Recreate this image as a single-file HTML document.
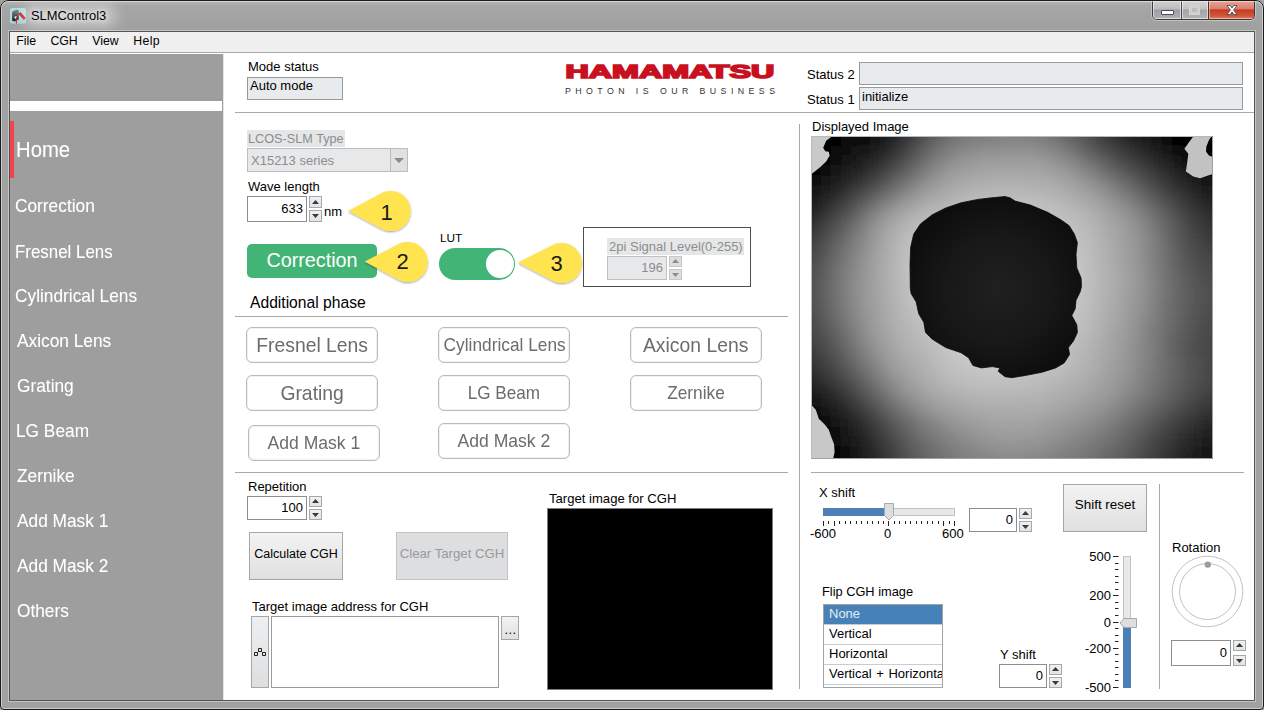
<!DOCTYPE html>
<html lang="en">
<head>
<meta charset="utf-8">
<title>SLMControl3</title>
<style>
*{box-sizing:border-box;margin:0;padding:0}
html,body{width:1264px;height:710px;overflow:hidden;background:#a0a0a0;font-family:"Liberation Sans",sans-serif;font-size:13px;color:#000}
.a{position:absolute;white-space:nowrap}
#win{position:absolute;left:0;top:0;width:1264px;height:710px;background:#a1a1a1;border-radius:8px 8px 4px 4px;overflow:hidden}
#winb{left:0;top:0;width:1264px;height:710px;border:1px solid #1b1b1b;border-radius:8px 8px 4px 4px;box-shadow:inset 0 0 0 1px rgba(255,255,255,.45);pointer-events:none}
#titlegrad{left:0;top:0;width:1264px;height:30px;background:linear-gradient(#b9b9b9 0,#a6a6a6 6px,#a0a0a0 30px)}
#client{left:9px;top:31px;width:1246px;height:670px;background:#fff;border:1px solid #555;box-shadow:0 0 0 1px rgba(255,255,255,.38)}
#menubar{left:10px;top:32px;width:1244px;height:21px;background:#f0f0f0;border-bottom:1px solid #a8a8a8}
#menubar span{position:absolute;top:2px;font-size:12.5px;color:#000}
#side{left:10px;top:54px;width:213px;box-shadow:1px 0 0 #e6e6e6;height:646px;background:#9e9e9e}
.nav{position:absolute;color:#fff;font-size:18.6px;transform:scaleX(.93);transform-origin:0 50%;white-space:nowrap;text-shadow:0 0 1px rgba(255,255,255,.35)}
.lbl{position:absolute;white-space:nowrap;font-size:13px;color:#000}
.hl{position:absolute;height:1px;background:#a9a9a9}
.vl{position:absolute;width:1px;background:#a9a9a9}
.ind{position:absolute;background:#e8ebee;border:1px solid #9a9a9a;font-size:13px;padding:1px 2px}
.num{position:absolute;background:#fff;border:1px solid #8e8e8e;font-size:13px;text-align:right;padding-right:3px}
.sp{position:absolute;width:13px;height:11px;border:1px solid #a4a8ab;background:linear-gradient(#f0f1f2,#e2e3e4)}
.sp.t{height:12px}
.sp:after{content:"";position:absolute;left:2px;top:3px;width:7px;height:4px;background:#3a3a3a}
.sp.u:after{top:2px;clip-path:polygon(50% 0,100% 100%,0 100%)}
.sp.d:after{top:3px;clip-path:polygon(0 0,100% 0,50% 100%)}
.sp.t.u:after{top:3px}
.sp.t.d:after{top:3px}
.pb{position:absolute;border:1px solid #b9b9b9;border-radius:6px;background:#fff;color:#6c6c6c;text-align:center;box-shadow:inset 0 0 0 1px #f1f1f1}
.dis{color:#8d8d8d}
.sp.off{background:#dcdee0;border-color:#c6c6c6}
.sp.off:after{background:#8e8e8e}
.r{text-align:right}
.li{left:0;width:118px;height:21px;border-top:1px solid #c9cdd1;padding:1px 0 0 5px;word-spacing:1px}
.pb span{display:inline-block;transform:scaleX(.93)}
.btn{position:absolute;border:1px solid #a6a6a6;background:linear-gradient(#f3f3f3,#e0e0e0);text-align:center;font-size:13px}
</style>
</head>
<body>
<div id="win">
<div id="titlegrad" class="a"></div>
<!-- title -->
<svg class="a" style="left:10px;top:8px" width="16" height="16" viewBox="0 0 16 16"><defs><linearGradient id="ig" x1="0" y1="0" x2="0" y2="1"><stop offset="0" stop-color="#8a8a8a"/><stop offset="1" stop-color="#161616"/></linearGradient></defs><rect x="0" y="0" width="16" height="15.6" rx="2.6" fill="#a9e0e4"/><rect x="0.5" y="11" width="15" height="4.6" rx="2" fill="#98cdd2" opacity=".6"/><path d="M2.1 3.8L6.5 1.4L8.8 2.2V11.4L4.2 13.6L2.1 12.4Z" fill="url(#ig)"/><circle cx="5.8" cy="9.5" r="1.3" fill="#fff"/><path d="M6.4 8.9V15.4" stroke="#e01622" stroke-width="1.1"/><path d="M9.4 5L14.8 11" stroke="#e0101c" stroke-width="2.7"/></svg>
<div class="a" style="left:22px;top:3px;width:96px;height:26px;border-radius:13px;background:rgba(255,255,255,.32);filter:blur(6px)"></div><div class="a" style="left:31px;top:8px;font-size:12.9px;color:#000;text-shadow:0 0 5px #fff,0 0 9px #fff">SLMControl3</div>
<div class="a" style="left:1152px;top:0;width:103px;height:20px;border:1px solid #3c3c3c;border-top:0;border-radius:0 0 5px 5px;overflow:hidden;box-shadow:0 0 0 1px rgba(255,255,255,.35)">
<div class="a" style="left:0;top:0;width:28px;height:19px;background:linear-gradient(#d2d2d2 0,#bcbcbc 48%,#9e9ea2 52%,#b2b2b6 100%);box-shadow:inset 0 0 0 1px rgba(255,255,255,.55)"></div>
<div class="a" style="left:28px;top:0;width:1px;height:19px;background:#4a4a4a"></div>
<div class="a" style="left:29px;top:0;width:26px;height:19px;background:linear-gradient(#d6d6d6 0,#c2c2c2 48%,#a4a4a6 52%,#b4b4b6 100%);box-shadow:inset 0 0 0 1px rgba(255,255,255,.55)"></div>
<div class="a" style="left:55px;top:0;width:1px;height:19px;background:#5a2a24"></div>
<div class="a" style="left:56px;top:0;width:46px;height:19px;background:linear-gradient(#eba99b 0,#dc7f6c 46%,#c43c26 52%,#d2573c 85%,#e08a66 100%);box-shadow:inset 0 0 0 1px rgba(255,255,255,.4)"></div>
<div class="a" style="left:8px;top:10px;width:13px;height:5px;background:#fff;border:1px solid #454a63;border-radius:1px"></div>
<div class="a" style="left:36px;top:5px;width:11px;height:10px;border:1px solid #d4d4d4;background:#bdbdbd;box-shadow:inset 0 0 0 2px #cfcfcf"></div>
<svg class="a" style="left:71px;top:3px" width="16" height="14" viewBox="0 0 16 14"><path d="M3 2.5h3.2l1.8 2.6l1.8-2.6h3.2l-3.4 4.5l3.4 4.5h-3.2l-1.8-2.6l-1.8 2.6h-3.2l3.4-4.5z" fill="#fff" stroke="#4a4a5a" stroke-width="0.9" stroke-linejoin="round"/></svg>
</div>
<div id="client" class="a"></div>
<div id="menubar" class="a"><span style="left:6.2px;font-size:12.3px">File</span><span style="left:40.4px;font-size:12.3px">CGH</span><span style="left:82.3px;font-size:12.3px">View</span><span style="left:123.3px;font-size:12.3px;letter-spacing:.35px">Help</span></div>
<div id="side" class="a">
 <div class="a" style="left:0;top:47px;width:212px;height:10px;background:#fff"></div>
 <div class="a" style="left:0;top:67px;width:4px;height:57px;background:#f4424d"></div>
 <div class="nav" style="left:6px;top:83px;font-size:21.6px;transform:scaleX(.94)">Home</div>
 <div class="nav" style="left:5px;top:141px">Correction</div>
 <div class="nav" style="left:5px;top:187px;font-size:18.6px;transform:scaleX(.908)">Fresnel Lens</div>
 <div class="nav" style="left:5px;top:231px">Cylindrical Lens</div>
 <div class="nav" style="left:7px;top:276px">Axicon Lens</div>
 <div class="nav" style="left:7px;top:321px">Grating</div>
 <div class="nav" style="left:6px;top:366px">LG Beam</div>
 <div class="nav" style="left:7px;top:411px">Zernike</div>
 <div class="nav" style="left:7px;top:456px">Add Mask 1</div>
 <div class="nav" style="left:7px;top:501px">Add Mask 2</div>
 <div class="nav" style="left:7px;top:546px">Others</div>
</div>
<!--MAIN-->
<div id="main" class="a" style="left:0;top:0;width:1264px;height:710px">
<!-- top strip -->
<div class="lbl" style="left:248px;top:59px">Mode status</div>
<div class="ind" style="left:247px;top:77px;width:96px;height:23px;padding-top:0">Auto mode</div>
<svg class="a" style="left:560px;top:58px" width="230" height="44" viewBox="0 0 230 44"><text x="5.6" y="19.5" font-family="Liberation Sans,sans-serif" font-weight="bold" font-size="18" fill="#c8101e" stroke="#c8101e" stroke-width="1.6" stroke-linejoin="miter" textLength="208.6" lengthAdjust="spacingAndGlyphs">HAMAMATSU</text><text x="5" y="35.9" font-family="Liberation Sans,sans-serif" font-size="8.8" fill="#333" textLength="210" lengthAdjust="spacing">PHOTON IS OUR BUSINESS</text></svg>
<div class="lbl" style="left:807px;top:67px">Status 2</div>
<div class="ind" style="left:859px;top:62px;width:384px;height:23px"></div>
<div class="lbl" style="left:807px;top:92px">Status 1</div>
<div class="ind" style="left:859px;top:87px;width:384px;height:23px">initialize</div>
<div class="hl" style="left:235px;top:112px;width:1019px"></div>
<!--LEFTCOL-->
<div class="lbl dis" style="left:247px;top:130px;width:98px;height:17px;background:#e4e6e7;padding:2px 0 0 1px;font-size:12.7px">LCOS-SLM Type</div>
<div class="a" style="left:247px;top:148px;width:161px;height:24px;background:#e6e8ea;border:1px solid #bdbdbd;color:#8d8d8d;padding:4px 0 0 3px">X15213 series<div class="a" style="left:142px;top:-1px;width:18px;height:24px;border:1px solid #bdbdbd;background:#dfe1e3"></div><div class="a" style="left:146px;top:9px;border:5px solid transparent;border-top:5px solid #8a8a8a;border-bottom:0"></div></div>
<div class="lbl" style="left:248px;top:179px">Wave length</div>
<div class="num" style="left:247px;top:196px;width:60px;height:26px;padding-top:4px">633</div>
<div class="sp t u" style="left:309px;top:196px"></div><div class="sp t d" style="left:309px;top:210px"></div>
<div class="lbl" style="left:324px;top:204px">nm</div>
<svg class="a" style="left:340px;top:182px" width="80" height="60" viewBox="0 0 80 60"><defs><filter id="cs" x="-20%" y="-20%" width="140%" height="150%"><feGaussianBlur in="SourceAlpha" stdDeviation="0.9"/><feOffset dx="0.4" dy="1"/><feComponentTransfer><feFuncA type="linear" slope="0.38"/></feComponentTransfer><feMerge><feMergeNode/><feMergeNode in="SourceGraphic"/></feMerge></filter></defs><path d="M8.3 29 L41 11.5 A20 20 0 1 1 41 46.5 Z" fill="#ffe450" filter="url(#cs)"/><text x="46.5" y="37.5" font-family="Liberation Sans,sans-serif" font-size="22" text-anchor="middle" fill="#1a1a1a">1</text></svg>
<div class="a" style="left:247px;top:244px;width:130px;height:34px;background:#42b476;border-radius:5px;color:#fff;font-size:19.8px;text-align:center;line-height:33px">Correction</div>
<svg class="a" style="left:356px;top:233px" width="80" height="60" viewBox="0 0 80 60"><path d="M8.7 28.5 L42 11.5 A20 20 0 1 1 42 46.5 Z" fill="#ffe450" filter="url(#cs)"/><text x="46.5" y="36" font-family="Liberation Sans,sans-serif" font-size="22" text-anchor="middle" fill="#1a1a1a">2</text></svg>
<div class="lbl" style="left:440px;top:231px;font-size:11.8px">LUT</div>
<div class="a" style="left:439px;top:248px;width:76px;height:32px;border-radius:16px;background:#42b476"></div>
<div class="a" style="left:486px;top:250px;width:28px;height:28px;border-radius:14px;background:#fff"></div>
<svg class="a" style="left:510px;top:234px" width="80" height="60" viewBox="0 0 80 60"><path d="M8 28.5 L42 11.5 A20 20 0 1 1 42 46.5 Z" fill="#ffe450" filter="url(#cs)"/><text x="46.5" y="36.5" font-family="Liberation Sans,sans-serif" font-size="22" text-anchor="middle" fill="#1a1a1a">3</text></svg>
<div class="a" style="left:583px;top:227px;width:168px;height:60px;border:1px solid #4d4d4d"></div>
<div class="lbl dis" style="left:607px;top:238px;width:137px;height:17px;background:#e4e6e7;padding:1px 0 0 2px">2pi Signal Level(0-255)</div>
<div class="num" style="left:607px;top:256px;width:60px;height:24px;padding-top:3px;background:#e6e8ea;border-color:#c0c0c0;color:#8d8d8d">196</div>
<div class="sp u off" style="left:669px;top:256px"></div><div class="sp d off" style="left:669px;top:269px"></div>
<div class="lbl" style="left:250px;top:294px;font-size:15.65px">Additional phase</div>
<div class="hl" style="left:235px;top:316px;width:553px"></div>
<div class="pb" style="left:246px;top:327px;width:132px;height:36px;font-size:20.8px;line-height:33px"><span>Fresnel Lens</span></div>
<div class="pb" style="left:438px;top:327px;width:132px;height:36px;font-size:18.6px;line-height:33px"><span>Cylindrical Lens</span></div>
<div class="pb" style="left:630px;top:327px;width:132px;height:36px;font-size:20.8px;line-height:33px"><span>Axicon Lens</span></div>
<div class="pb" style="left:246px;top:375px;width:132px;height:36px;font-size:20.8px;line-height:34px"><span>Grating</span></div>
<div class="pb" style="left:438px;top:375px;width:132px;height:36px;font-size:18.4px;line-height:33px"><span>LG Beam</span></div>
<div class="pb" style="left:630px;top:375px;width:132px;height:36px;font-size:18.6px;line-height:33px"><span>Zernike</span></div>
<div class="pb" style="left:248px;top:425px;width:132px;height:36px;font-size:18.9px;line-height:33px"><span>Add Mask 1</span></div>
<div class="pb" style="left:438px;top:423px;width:132px;height:36px;font-size:18.9px;line-height:33px"><span>Add Mask 2</span></div>
<div class="hl" style="left:235px;top:472px;width:553px"></div>
<div class="lbl" style="left:248px;top:479px">Repetition</div>
<div class="num" style="left:247px;top:496px;width:60px;height:24px;padding-top:3px">100</div>
<div class="sp u" style="left:309px;top:496px"></div><div class="sp d" style="left:309px;top:509px"></div>
<div class="btn" style="left:249px;top:532px;width:94px;height:48px;line-height:42px;font-size:12.5px">Calculate CGH</div>
<div class="btn" style="left:396px;top:532px;width:112px;height:48px;line-height:41px;font-size:13.2px;background:#dcdee0;border-color:#c2c2c2;color:#999">Clear Target CGH</div>
<div class="lbl" style="left:252px;top:599px">Target image address for CGH</div>
<div class="btn" style="left:251px;top:616px;width:18px;height:72px;background:linear-gradient(#eeeff0,#dcdee0)"></div>
<svg class="a" style="left:253px;top:647px" width="14" height="10" viewBox="0 0 14 10"><path d="M1.5 5.5h3v3h-3zM9.5 5.5h3v3h-3zM5.5 1.5h3v3h-3zM4.5 5.5l1-1M8.5 4.5l1 1" fill="none" stroke="#222" stroke-width="1"/></svg>
<div class="a" style="left:271px;top:616px;width:228px;height:72px;background:#fff;border:1px solid #9a9a9a"></div>
<div class="btn" style="left:501px;top:616px;width:18px;height:24px;line-height:26px;font-size:13px;letter-spacing:0.4px;padding-left:1px">...</div>
<div class="lbl" style="left:549px;top:491px;font-size:13.1px">Target image for CGH</div>
<div class="a" style="left:547px;top:508px;width:226px;height:182px;background:#000;border:1px solid #7c7c7c"></div>
<div class="vl" style="left:799px;top:124px;height:565px"></div>

<div class="lbl" style="left:812px;top:119px">Displayed Image</div>
<svg class="a" style="left:811px;top:136px" width="402" height="323" viewBox="811 136 402 323">
<defs>
<filter id="fb" filterUnits="userSpaceOnUse" x="771" y="96" width="482" height="403"><feGaussianBlur stdDeviation="7"/></filter>
<radialGradient id="g2" gradientUnits="userSpaceOnUse" cx="998" cy="290" r="95"><stop offset="0" stop-color="#202020"/><stop offset="0.55" stop-color="#181818"/><stop offset="1" stop-color="#0d0d0d"/></radialGradient>
</defs>
<rect x="811" y="136" width="402" height="323" fill="#777"/>
<g filter="url(#fb)"><!--FIELD--><path fill="#060606" d="M791 116h70v10h-70zM1171 116h70v10h-70zM791 126h70v10h-70zM1171 126h70v10h-70zM791 136h50v10h-50zM1171 136h70v10h-70zM791 146h40v10h-40zM1191 146h50v10h-50zM791 156h40v10h-40zM1201 156h40v10h-40zM791 166h30v10h-30zM1211 166h30v10h-30zM791 176h20v10h-20zM791 406h20v10h-20zM791 416h30v10h-30zM791 426h40v10h-40zM791 436h40v10h-40zM791 446h50v10h-50zM791 456h50v10h-50zM791 466h50v10h-50zM791 476h50v10h-50z"/><path fill="#090909" d="M861 116h10v10h-10zM1161 116h10v10h-10zM861 126h10v10h-10zM1161 126h10v10h-10zM841 136h20v10h-20zM831 146h10v10h-10zM1181 146h10v10h-10zM1191 156h10v10h-10zM1201 166h10v10h-10zM811 406h10v10h-10zM821 416h10v10h-10zM831 436h10v10h-10z"/><path fill="#0c0c0c" d="M861 136h10v10h-10zM1161 136h10v10h-10zM841 146h10v10h-10zM831 156h10v10h-10zM821 166h10v10h-10zM811 176h10v10h-10zM831 426h10v10h-10zM841 456h10v10h-10zM841 466h10v10h-10zM841 476h10v10h-10z"/><path fill="#0f0f0f" d="M871 116h10v10h-10zM1151 116h10v10h-10zM871 126h10v10h-10zM1151 126h10v10h-10zM1171 146h10v10h-10zM1181 156h10v10h-10zM1211 176h30v10h-30zM791 186h20v10h-20zM791 396h20v10h-20zM841 446h10v10h-10z"/><path fill="#121212" d="M871 136h10v10h-10zM851 146h10v10h-10zM841 156h10v10h-10zM831 166h10v10h-10zM1191 166h10v10h-10zM821 176h10v10h-10zM1201 176h10v10h-10zM811 186h10v10h-10zM821 406h10v10h-10zM831 416h10v10h-10zM841 436h10v10h-10zM1211 456h30v10h-30zM1211 466h30v10h-30zM1211 476h30v10h-30z"/><path fill="#151515" d="M1141 116h10v10h-10zM1141 126h10v10h-10zM1151 136h10v10h-10zM861 146h10v10h-10zM1161 146h10v10h-10zM1211 186h30v10h-30zM791 196h20v10h-20zM811 396h10v10h-10zM841 426h10v10h-10zM1211 446h30v10h-30zM851 456h10v10h-10zM1201 456h10v10h-10zM851 466h10v10h-10zM1201 466h10v10h-10zM851 476h10v10h-10zM1201 476h10v10h-10z"/><path fill="#181818" d="M881 116h10v10h-10zM881 126h10v10h-10zM851 156h10v10h-10zM1171 156h10v10h-10zM1181 166h10v10h-10zM1211 436h30v10h-30zM851 446h10v10h-10zM1201 446h10v10h-10z"/><path fill="#1b1b1b" d="M1131 116h10v10h-10zM1131 126h10v10h-10zM1141 136h10v10h-10zM841 166h10v10h-10zM831 176h10v10h-10zM1191 176h10v10h-10zM821 186h10v10h-10zM1201 186h10v10h-10zM811 196h10v10h-10zM791 386h20v10h-20zM821 396h10v10h-10zM831 406h10v10h-10zM841 416h10v10h-10zM851 436h10v10h-10zM1201 436h10v10h-10zM1191 456h10v10h-10zM1191 466h10v10h-10zM1191 476h10v10h-10z"/><path fill="#1e1e1e" d="M881 136h10v10h-10zM871 146h10v10h-10zM1151 146h10v10h-10zM1211 196h30v10h-30zM791 206h20v10h-20zM811 386h10v10h-10zM1211 426h30v10h-30zM1191 446h10v10h-10zM861 456h10v10h-10zM861 466h10v10h-10zM861 476h10v10h-10z"/><path fill="#212121" d="M1131 136h10v10h-10zM861 156h10v10h-10zM1161 156h10v10h-10zM851 166h10v10h-10zM1171 166h10v10h-10zM1181 176h10v10h-10zM851 426h10v10h-10zM1201 426h10v10h-10zM861 446h10v10h-10zM1181 456h10v10h-10zM1181 466h10v10h-10zM1181 476h10v10h-10z"/><path fill="#242424" d="M891 116h10v10h-10zM1121 116h10v10h-10zM891 126h10v10h-10zM1121 126h10v10h-10zM841 176h10v10h-10zM831 186h10v10h-10zM1191 186h10v10h-10zM1201 196h10v10h-10zM811 206h10v10h-10zM791 376h20v10h-20zM861 436h10v10h-10zM1191 436h10v10h-10zM1181 446h10v10h-10z"/><path fill="#272727" d="M881 146h10v10h-10zM1141 146h10v10h-10zM821 196h10v10h-10zM1211 206h30v10h-30zM791 216h20v10h-20zM821 386h10v10h-10zM831 396h10v10h-10zM841 406h10v10h-10zM851 416h10v10h-10zM1211 416h30v10h-30zM871 456h10v10h-10zM871 466h10v10h-10zM871 476h10v10h-10z"/><path fill="#2a2a2a" d="M891 136h10v10h-10zM1121 136h10v10h-10zM871 156h10v10h-10zM1151 156h10v10h-10zM861 166h10v10h-10zM1161 166h10v10h-10zM811 376h10v10h-10zM1201 416h10v10h-10zM861 426h10v10h-10zM1191 426h10v10h-10zM1181 436h10v10h-10zM871 446h10v10h-10zM1171 456h10v10h-10zM1171 466h10v10h-10zM1171 476h10v10h-10z"/><path fill="#2d2d2d" d="M1111 116h10v10h-10zM1111 126h10v10h-10zM1131 146h10v10h-10zM851 176h10v10h-10zM1171 176h10v10h-10zM1181 186h10v10h-10zM1191 196h10v10h-10zM1201 206h10v10h-10zM1211 216h30v10h-30zM791 366h20v10h-20zM1171 446h10v10h-10z"/><path fill="#303030" d="M841 186h10v10h-10zM821 206h10v10h-10zM811 216h10v10h-10zM811 366h10v10h-10zM831 386h10v10h-10zM841 396h10v10h-10zM1211 406h30v10h-30zM1191 416h10v10h-10zM1181 426h10v10h-10zM871 436h10v10h-10z"/><path fill="#333333" d="M901 116h10v10h-10zM901 126h10v10h-10zM1111 136h10v10h-10zM891 146h10v10h-10zM881 156h10v10h-10zM1141 156h10v10h-10zM831 196h10v10h-10zM1201 216h10v10h-10zM791 226h20v10h-20zM1211 226h30v10h-30zM791 356h20v10h-20zM821 376h10v10h-10zM851 406h10v10h-10zM1201 406h10v10h-10zM861 416h10v10h-10zM1171 436h10v10h-10zM881 456h10v10h-10zM1161 456h10v10h-10zM881 466h10v10h-10zM1161 466h10v10h-10zM881 476h10v10h-10zM1161 476h10v10h-10z"/><path fill="#363636" d="M1101 116h10v10h-10zM1101 126h10v10h-10zM901 136h10v10h-10zM1121 146h10v10h-10zM871 166h10v10h-10zM1151 166h10v10h-10zM1161 176h10v10h-10zM1171 186h10v10h-10zM1181 196h10v10h-10zM1191 206h10v10h-10zM1161 446h10v10h-10z"/><path fill="#393939" d="M861 176h10v10h-10zM811 226h10v10h-10zM1201 226h10v10h-10zM1211 236h30v10h-30zM791 346h20v10h-20zM811 356h10v10h-10zM1211 396h30v10h-30zM1181 416h10v10h-10zM871 426h10v10h-10zM1171 426h10v10h-10zM881 446h10v10h-10z"/><path fill="#3c3c3c" d="M1101 136h10v10h-10zM1131 156h10v10h-10zM851 186h10v10h-10zM821 216h10v10h-10zM1191 216h10v10h-10zM791 236h20v10h-20zM821 366h10v10h-10zM831 376h10v10h-10zM841 386h10v10h-10zM1201 396h10v10h-10zM1191 406h10v10h-10zM1161 436h10v10h-10zM1151 456h10v10h-10zM1151 466h10v10h-10zM1151 476h10v10h-10z"/><path fill="#3f3f3f" d="M1141 166h10v10h-10zM841 196h10v10h-10zM831 206h10v10h-10zM1181 206h10v10h-10zM1201 236h10v10h-10zM1211 246h30v10h-30zM791 336h20v10h-20zM811 346h10v10h-10zM1211 386h30v10h-30zM851 396h10v10h-10zM861 406h10v10h-10zM881 436h10v10h-10zM1151 446h10v10h-10z"/><path fill="#424242" d="M911 116h10v10h-10zM1091 116h10v10h-10zM911 126h10v10h-10zM1091 126h10v10h-10zM901 146h10v10h-10zM1111 146h10v10h-10zM891 156h10v10h-10zM881 166h10v10h-10zM1151 176h10v10h-10zM1161 186h10v10h-10zM1171 196h10v10h-10zM1191 226h10v10h-10zM811 236h10v10h-10zM791 246h20v10h-20zM1201 246h10v10h-10zM1211 256h30v10h-30zM1211 366h30v10h-30zM1211 376h30v10h-30zM871 416h10v10h-10zM1171 416h10v10h-10zM1161 426h10v10h-10zM891 456h10v10h-10zM891 466h10v10h-10zM891 476h10v10h-10z"/><path fill="#454545" d="M911 136h10v10h-10zM1121 156h10v10h-10zM871 176h10v10h-10zM1191 236h10v10h-10zM791 326h20v10h-20zM1211 326h30v10h-30zM811 336h10v10h-10zM1211 336h30v10h-30zM1211 346h30v10h-30zM821 356h10v10h-10zM1211 356h30v10h-30zM1201 386h10v10h-10zM1191 396h10v10h-10zM1181 406h10v10h-10zM881 426h10v10h-10zM1151 436h10v10h-10zM891 446h10v10h-10zM1141 456h10v10h-10zM1141 466h10v10h-10zM1141 476h10v10h-10z"/><path fill="#484848" d="M1091 136h10v10h-10zM1181 216h10v10h-10zM821 226h10v10h-10zM811 246h10v10h-10zM791 256h20v10h-20zM1201 256h10v10h-10zM1211 266h30v10h-30zM791 316h20v10h-20zM1211 316h30v10h-30zM1201 336h10v10h-10zM1201 346h10v10h-10zM1201 356h10v10h-10zM831 366h10v10h-10zM1201 366h10v10h-10zM841 376h10v10h-10zM1201 376h10v10h-10zM1141 446h10v10h-10z"/><path fill="#4b4b4b" d="M1101 146h10v10h-10zM1131 166h10v10h-10zM861 186h10v10h-10zM831 216h10v10h-10zM1181 226h10v10h-10zM1191 246h10v10h-10zM791 266h20v10h-20zM1201 266h10v10h-10zM1211 276h30v10h-30zM1211 286h30v10h-30zM1211 296h30v10h-30zM791 306h20v10h-20zM1211 306h30v10h-30zM1201 316h10v10h-10zM811 326h10v10h-10zM1201 326h10v10h-10zM821 346h10v10h-10zM851 386h10v10h-10zM1191 386h10v10h-10zM1161 416h10v10h-10zM1151 426h10v10h-10zM891 436h10v10h-10z"/><path fill="#4e4e4e" d="M1081 116h10v10h-10zM1081 126h10v10h-10zM1141 176h10v10h-10zM1151 186h10v10h-10zM851 196h10v10h-10zM1161 196h10v10h-10zM841 206h10v10h-10zM1171 206h10v10h-10zM811 256h10v10h-10zM1191 256h10v10h-10zM791 276h20v10h-20zM1201 276h10v10h-10zM791 286h20v10h-20zM791 296h20v10h-20zM1201 306h10v10h-10zM811 316h10v10h-10zM1191 336h10v10h-10zM1191 346h10v10h-10zM831 356h10v10h-10zM861 396h10v10h-10zM1181 396h10v10h-10zM871 406h10v10h-10zM1171 406h10v10h-10zM1141 436h10v10h-10zM901 456h10v10h-10zM1131 456h10v10h-10zM901 466h10v10h-10zM1131 466h10v10h-10zM901 476h10v10h-10zM1131 476h10v10h-10z"/><path fill="#515151" d="M921 116h10v10h-10zM921 126h10v10h-10zM901 156h10v10h-10zM1111 156h10v10h-10zM891 166h10v10h-10zM821 236h10v10h-10zM1181 236h10v10h-10zM811 266h10v10h-10zM1191 266h10v10h-10zM1201 286h10v10h-10zM1201 296h10v10h-10zM811 306h10v10h-10zM1191 326h10v10h-10zM821 336h10v10h-10zM1191 356h10v10h-10zM1191 366h10v10h-10zM1191 376h10v10h-10zM881 416h10v10h-10z"/><path fill="#545454" d="M1081 136h10v10h-10zM911 146h10v10h-10zM1121 166h10v10h-10zM881 176h10v10h-10zM1171 216h10v10h-10zM1181 246h10v10h-10zM811 276h10v10h-10zM1191 276h10v10h-10zM811 286h10v10h-10zM811 296h10v10h-10zM1191 306h10v10h-10zM1191 316h10v10h-10zM841 366h10v10h-10zM1181 386h10v10h-10zM1151 416h10v10h-10zM891 426h10v10h-10zM901 446h10v10h-10zM1131 446h10v10h-10z"/><path fill="#575757" d="M921 136h10v10h-10zM1091 146h10v10h-10zM871 186h10v10h-10zM831 226h10v10h-10zM821 246h10v10h-10zM1181 256h10v10h-10zM1191 286h10v10h-10zM1191 296h10v10h-10zM821 326h10v10h-10zM1181 336h10v10h-10zM831 346h10v10h-10zM1181 346h10v10h-10zM1181 356h10v10h-10zM851 376h10v10h-10zM1181 376h10v10h-10zM1171 396h10v10h-10zM1161 406h10v10h-10zM1141 426h10v10h-10zM1121 456h10v10h-10zM1121 466h10v10h-10zM1121 476h10v10h-10z"/><path fill="#5a5a5a" d="M1071 116h10v10h-10zM1071 126h10v10h-10zM1131 176h10v10h-10zM1141 186h10v10h-10zM1161 206h10v10h-10zM841 216h10v10h-10zM1171 226h10v10h-10zM1181 266h10v10h-10zM1181 316h10v10h-10zM1181 326h10v10h-10zM1181 366h10v10h-10zM861 386h10v10h-10zM901 436h10v10h-10zM1131 436h10v10h-10zM911 456h10v10h-10zM911 466h10v10h-10zM911 476h10v10h-10z"/><path fill="#5d5d5d" d="M931 116h10v10h-10zM931 126h10v10h-10zM1101 156h10v10h-10zM861 196h10v10h-10zM1151 196h10v10h-10zM851 206h10v10h-10zM1171 236h10v10h-10zM821 256h10v10h-10zM1181 276h10v10h-10zM1181 286h10v10h-10zM1181 296h10v10h-10zM1181 306h10v10h-10zM821 316h10v10h-10zM831 336h10v10h-10zM841 356h10v10h-10zM1171 386h10v10h-10zM871 396h10v10h-10zM881 406h10v10h-10zM891 416h10v10h-10zM911 446h10v10h-10zM1121 446h10v10h-10z"/><path fill="#606060" d="M1071 136h10v10h-10zM911 156h10v10h-10zM901 166h10v10h-10zM1111 166h10v10h-10zM831 236h10v10h-10zM1171 246h10v10h-10zM821 266h10v10h-10zM821 306h10v10h-10zM1171 336h10v10h-10zM1171 346h10v10h-10zM1171 376h10v10h-10zM1161 396h10v10h-10zM1151 406h10v10h-10zM1141 416h10v10h-10zM901 426h10v10h-10zM1131 426h10v10h-10zM1111 456h10v10h-10zM1111 466h10v10h-10zM1111 476h10v10h-10z"/><path fill="#636363" d="M931 136h10v10h-10zM921 146h10v10h-10zM1081 146h10v10h-10zM891 176h10v10h-10zM1161 216h10v10h-10zM1171 256h10v10h-10zM821 276h10v10h-10zM821 286h10v10h-10zM821 296h10v10h-10zM831 326h10v10h-10zM1171 326h10v10h-10zM1171 356h10v10h-10zM851 366h10v10h-10zM1171 366h10v10h-10zM1121 436h10v10h-10zM921 456h10v10h-10zM921 466h10v10h-10zM921 476h10v10h-10z"/><path fill="#666666" d="M1061 116h10v10h-10zM1061 126h10v10h-10zM1121 176h10v10h-10zM881 186h10v10h-10zM841 226h10v10h-10zM831 246h10v10h-10zM1171 266h10v10h-10zM1171 306h10v10h-10zM1171 316h10v10h-10zM841 346h10v10h-10zM861 376h10v10h-10zM1161 386h10v10h-10zM911 436h10v10h-10zM1111 446h10v10h-10zM1101 456h10v10h-10zM1101 466h10v10h-10zM1101 476h10v10h-10z"/><path fill="#696969" d="M941 116h10v10h-10zM941 126h10v10h-10zM1091 156h10v10h-10zM1131 186h10v10h-10zM1141 196h10v10h-10zM1151 206h10v10h-10zM1161 226h10v10h-10zM1171 276h10v10h-10zM1171 286h10v10h-10zM1171 296h10v10h-10zM831 316h10v10h-10zM871 386h10v10h-10zM1151 396h10v10h-10zM1141 406h10v10h-10zM1131 416h10v10h-10zM1121 426h10v10h-10zM921 446h10v10h-10z"/><path fill="#6c6c6c" d="M1061 136h10v10h-10zM1101 166h10v10h-10zM871 196h10v10h-10zM851 216h10v10h-10zM1161 236h10v10h-10zM831 256h10v10h-10zM841 336h10v10h-10zM1161 336h10v10h-10zM1161 346h10v10h-10zM851 356h10v10h-10zM1161 356h10v10h-10zM1161 366h10v10h-10zM1161 376h10v10h-10zM881 396h10v10h-10zM891 406h10v10h-10zM901 416h10v10h-10zM911 426h10v10h-10zM1111 436h10v10h-10zM1101 446h10v10h-10zM931 456h10v10h-10zM931 466h10v10h-10zM931 476h10v10h-10z"/><path fill="#6f6f6f" d="M951 116h10v10h-10zM1051 116h10v10h-10zM951 126h10v10h-10zM1051 126h10v10h-10zM941 136h10v10h-10zM931 146h10v10h-10zM1071 146h10v10h-10zM921 156h10v10h-10zM911 166h10v10h-10zM901 176h10v10h-10zM861 206h10v10h-10zM841 236h10v10h-10zM1161 246h10v10h-10zM1161 256h10v10h-10zM831 266h10v10h-10zM831 306h10v10h-10zM1161 316h10v10h-10zM1161 326h10v10h-10zM1151 386h10v10h-10zM921 436h10v10h-10zM1091 456h10v10h-10zM1091 466h10v10h-10zM1091 476h10v10h-10z"/><path fill="#727272" d="M1111 176h10v10h-10zM1151 216h10v10h-10zM1161 266h10v10h-10zM831 276h10v10h-10zM1161 276h10v10h-10zM831 286h10v10h-10zM831 296h10v10h-10zM1161 296h10v10h-10zM1161 306h10v10h-10zM841 326h10v10h-10zM861 366h10v10h-10zM1141 396h10v10h-10zM1131 406h10v10h-10zM1121 416h10v10h-10zM1111 426h10v10h-10zM1101 436h10v10h-10zM931 446h10v10h-10zM1091 446h10v10h-10zM941 456h10v10h-10zM1081 456h10v10h-10zM941 466h10v10h-10zM1081 466h10v10h-10zM941 476h10v10h-10zM1081 476h10v10h-10z"/><path fill="#757575" d="M961 116h10v10h-10zM1041 116h10v10h-10zM961 126h10v10h-10zM1041 126h10v10h-10zM1051 136h10v10h-10zM1081 156h10v10h-10zM891 186h10v10h-10zM1121 186h10v10h-10zM841 246h10v10h-10zM1161 286h10v10h-10zM851 346h10v10h-10zM871 376h10v10h-10zM1151 376h10v10h-10z"/><path fill="#787878" d="M971 116h10v10h-10zM971 126h10v10h-10zM951 136h10v10h-10zM1091 166h10v10h-10zM1131 196h10v10h-10zM1141 206h10v10h-10zM851 226h10v10h-10zM1151 226h10v10h-10zM841 316h10v10h-10zM1151 326h10v10h-10zM1151 336h10v10h-10zM1151 346h10v10h-10zM1151 356h10v10h-10zM1151 366h10v10h-10zM881 386h10v10h-10zM901 406h10v10h-10zM911 416h10v10h-10zM921 426h10v10h-10zM931 436h10v10h-10zM1091 436h10v10h-10zM941 446h10v10h-10zM1081 446h10v10h-10zM951 456h10v10h-10zM1071 456h10v10h-10zM951 466h10v10h-10zM1071 466h10v10h-10zM951 476h10v10h-10zM1071 476h10v10h-10z"/><path fill="#7b7b7b" d="M981 116h20v10h-20zM1031 116h10v10h-10zM981 126h20v10h-20zM1031 126h10v10h-10zM961 136h10v10h-10zM941 146h10v10h-10zM1061 146h10v10h-10zM881 196h10v10h-10zM1151 236h10v10h-10zM1151 246h10v10h-10zM841 256h10v10h-10zM841 306h10v10h-10zM1151 316h10v10h-10zM851 336h10v10h-10zM861 356h10v10h-10zM1141 386h10v10h-10zM891 396h10v10h-10zM1131 396h10v10h-10zM1121 406h10v10h-10zM1111 416h10v10h-10zM1101 426h10v10h-10zM1061 456h10v10h-10zM1061 466h10v10h-10zM1061 476h10v10h-10z"/><path fill="#7e7e7e" d="M1001 116h30v10h-30zM1001 126h30v10h-30zM1041 136h10v10h-10zM931 156h10v10h-10zM921 166h10v10h-10zM911 176h10v10h-10zM1101 176h10v10h-10zM861 216h10v10h-10zM851 236h10v10h-10zM1151 256h10v10h-10zM841 266h10v10h-10zM1151 266h10v10h-10zM841 296h10v10h-10zM1151 296h10v10h-10zM1151 306h10v10h-10zM1141 376h10v10h-10zM931 426h10v10h-10zM941 436h10v10h-10zM1081 436h10v10h-10zM951 446h10v10h-10zM1071 446h10v10h-10zM961 456h10v10h-10zM1051 456h10v10h-10zM961 466h10v10h-10zM1051 466h10v10h-10zM961 476h10v10h-10zM1051 476h10v10h-10z"/><path fill="#818181" d="M971 136h20v10h-20zM1031 136h10v10h-10zM1071 156h10v10h-10zM1111 186h10v10h-10zM871 206h10v10h-10zM1141 216h10v10h-10zM841 276h10v10h-10zM1151 276h10v10h-10zM841 286h10v10h-10zM1151 286h10v10h-10zM851 326h10v10h-10zM1141 356h10v10h-10zM871 366h10v10h-10zM1141 366h10v10h-10zM921 416h10v10h-10zM1091 426h10v10h-10zM1061 446h10v10h-10zM971 456h10v10h-10zM971 466h10v10h-10zM971 476h10v10h-10z"/><path fill="#848484" d="M991 136h40v10h-40zM951 146h10v10h-10zM1051 146h10v10h-10zM1081 166h10v10h-10zM901 186h10v10h-10zM1121 196h10v10h-10zM1131 206h10v10h-10zM851 246h10v10h-10zM1141 326h10v10h-10zM1141 336h10v10h-10zM861 346h10v10h-10zM1141 346h10v10h-10zM881 376h10v10h-10zM1131 386h10v10h-10zM1121 396h10v10h-10zM911 406h10v10h-10zM1111 406h10v10h-10zM1101 416h10v10h-10zM1071 436h10v10h-10zM961 446h10v10h-10zM1051 446h10v10h-10zM981 456h10v10h-10zM1031 456h20v10h-20zM981 466h10v10h-10zM1031 466h20v10h-20zM981 476h10v10h-10zM1031 476h20v10h-20z"/><path fill="#878787" d="M941 156h10v10h-10zM861 226h10v10h-10zM1141 226h10v10h-10zM851 256h10v10h-10zM851 316h10v10h-10zM1141 316h10v10h-10zM1131 376h10v10h-10zM891 386h10v10h-10zM901 396h10v10h-10zM941 426h10v10h-10zM1081 426h10v10h-10zM951 436h10v10h-10zM971 446h10v10h-10zM991 456h40v10h-40zM991 466h40v10h-40zM991 476h40v10h-40z"/><path fill="#8a8a8a" d="M961 146h10v10h-10zM1041 146h10v10h-10zM1061 156h10v10h-10zM931 166h10v10h-10zM1091 176h10v10h-10zM891 196h10v10h-10zM1141 236h10v10h-10zM1141 246h10v10h-10zM1141 256h10v10h-10zM851 266h10v10h-10zM851 306h10v10h-10zM1141 306h10v10h-10zM861 336h10v10h-10zM871 356h10v10h-10zM1131 366h10v10h-10zM931 416h10v10h-10zM1091 416h10v10h-10zM1071 426h10v10h-10zM961 436h10v10h-10zM1061 436h10v10h-10zM981 446h10v10h-10zM1041 446h10v10h-10z"/><path fill="#8d8d8d" d="M971 146h10v10h-10zM921 176h10v10h-10zM1101 186h10v10h-10zM1131 216h10v10h-10zM861 236h10v10h-10zM1141 266h10v10h-10zM851 276h10v10h-10zM1141 276h10v10h-10zM851 286h10v10h-10zM1141 286h10v10h-10zM851 296h10v10h-10zM1141 296h10v10h-10zM1131 346h10v10h-10zM1131 356h10v10h-10zM1121 386h10v10h-10zM1111 396h10v10h-10zM1101 406h10v10h-10zM951 426h10v10h-10zM1051 436h10v10h-10zM991 446h10v10h-10zM1021 446h20v10h-20z"/><path fill="#909090" d="M981 146h20v10h-20zM1031 146h10v10h-10zM951 156h10v10h-10zM1071 166h10v10h-10zM911 186h10v10h-10zM1111 196h10v10h-10zM881 206h10v10h-10zM1121 206h10v10h-10zM871 216h10v10h-10zM861 326h10v10h-10zM1131 326h10v10h-10zM1131 336h10v10h-10zM881 366h10v10h-10zM921 406h10v10h-10zM1081 416h10v10h-10zM1061 426h10v10h-10zM971 436h10v10h-10zM1001 446h20v10h-20z"/><path fill="#939393" d="M1001 146h30v10h-30zM1051 156h10v10h-10zM1081 176h10v10h-10zM1131 226h10v10h-10zM861 246h10v10h-10zM861 316h10v10h-10zM1131 316h10v10h-10zM871 346h10v10h-10zM891 376h10v10h-10zM1121 376h10v10h-10zM911 396h10v10h-10zM1091 406h10v10h-10zM941 416h10v10h-10zM961 426h10v10h-10zM981 436h10v10h-10zM1041 436h10v10h-10z"/><path fill="#969696" d="M961 156h10v10h-10zM941 166h10v10h-10zM931 176h10v10h-10zM901 196h10v10h-10zM1131 236h10v10h-10zM1131 246h10v10h-10zM861 256h10v10h-10zM1131 256h10v10h-10zM1131 296h10v10h-10zM861 306h10v10h-10zM1131 306h10v10h-10zM1121 356h10v10h-10zM1121 366h10v10h-10zM901 386h10v10h-10zM1111 386h10v10h-10zM1101 396h10v10h-10zM1071 416h10v10h-10zM1051 426h10v10h-10zM991 436h10v10h-10zM1021 436h20v10h-20z"/><path fill="#999999" d="M971 156h10v10h-10zM1041 156h10v10h-10zM1061 166h10v10h-10zM1091 186h10v10h-10zM1101 196h10v10h-10zM1111 206h10v10h-10zM1121 216h10v10h-10zM871 226h10v10h-10zM861 266h10v10h-10zM1131 266h10v10h-10zM861 276h10v10h-10zM1131 276h10v10h-10zM861 286h10v10h-10zM1131 286h10v10h-10zM861 296h10v10h-10zM871 336h10v10h-10zM1121 336h10v10h-10zM1121 346h10v10h-10zM881 356h10v10h-10zM1111 376h10v10h-10zM931 406h10v10h-10zM1081 406h10v10h-10zM951 416h10v10h-10zM1061 416h10v10h-10zM971 426h10v10h-10zM1041 426h10v10h-10zM1001 436h20v10h-20z"/><path fill="#9c9c9c" d="M981 156h60v10h-60zM951 166h10v10h-10zM1051 166h10v10h-10zM1071 176h10v10h-10zM921 186h10v10h-10zM891 206h10v10h-10zM881 216h10v10h-10zM1121 226h10v10h-10zM871 236h10v10h-10zM1121 316h10v10h-10zM871 326h10v10h-10zM1121 326h10v10h-10zM881 346h10v10h-10zM891 366h10v10h-10zM1111 366h10v10h-10zM901 376h10v10h-10zM911 386h10v10h-10zM1101 386h10v10h-10zM921 396h10v10h-10zM1091 396h10v10h-10zM941 406h10v10h-10zM1071 406h10v10h-10zM961 416h10v10h-10zM1051 416h10v10h-10zM981 426h10v10h-10zM1031 426h10v10h-10z"/><path fill="#9f9f9f" d="M961 166h10v10h-10zM941 176h10v10h-10zM1081 186h10v10h-10zM911 196h10v10h-10zM1121 236h10v10h-10zM871 246h10v10h-10zM1121 246h10v10h-10zM1121 256h10v10h-10zM1121 296h10v10h-10zM871 306h10v10h-10zM1121 306h10v10h-10zM871 316h10v10h-10zM1111 346h10v10h-10zM1111 356h10v10h-10zM1101 376h10v10h-10zM1081 396h10v10h-10zM971 416h10v10h-10zM1041 416h10v10h-10zM991 426h40v10h-40z"/><path fill="#a2a2a2" d="M971 166h10v10h-10zM1041 166h10v10h-10zM1061 176h10v10h-10zM931 186h10v10h-10zM1091 196h10v10h-10zM1101 206h10v10h-10zM1111 216h10v10h-10zM871 256h10v10h-10zM871 266h10v10h-10zM1121 266h10v10h-10zM871 276h10v10h-10zM1121 276h10v10h-10zM871 286h10v10h-10zM1121 286h10v10h-10zM871 296h10v10h-10zM1111 326h10v10h-10zM881 336h10v10h-10zM1111 336h10v10h-10zM891 356h10v10h-10zM901 366h10v10h-10zM1101 366h10v10h-10zM1091 386h10v10h-10zM931 396h10v10h-10zM951 406h10v10h-10zM1061 406h10v10h-10zM981 416h10v10h-10zM1031 416h10v10h-10z"/><path fill="#a5a5a5" d="M981 166h60v10h-60zM951 176h10v10h-10zM1071 186h10v10h-10zM901 206h10v10h-10zM881 226h10v10h-10zM1111 226h10v10h-10zM1111 236h10v10h-10zM1111 316h10v10h-10zM881 326h10v10h-10zM891 346h10v10h-10zM1101 356h10v10h-10zM911 376h10v10h-10zM1091 376h10v10h-10zM921 386h10v10h-10zM1071 396h10v10h-10zM961 406h10v10h-10zM1051 406h10v10h-10zM991 416h40v10h-40z"/><path fill="#a8a8a8" d="M961 176h10v10h-10zM1051 176h10v10h-10zM941 186h10v10h-10zM921 196h10v10h-10zM1081 196h10v10h-10zM891 216h10v10h-10zM1101 216h10v10h-10zM881 236h10v10h-10zM1111 246h10v10h-10zM1111 256h10v10h-10zM1111 296h10v10h-10zM881 306h10v10h-10zM1111 306h10v10h-10zM881 316h10v10h-10zM1101 336h10v10h-10zM1101 346h10v10h-10zM901 356h10v10h-10zM1081 386h10v10h-10zM941 396h10v10h-10zM1061 396h10v10h-10zM971 406h10v10h-10zM1041 406h10v10h-10z"/><path fill="#ababab" d="M971 176h10v10h-10zM1031 176h20v10h-20zM1061 186h10v10h-10zM1091 206h10v10h-10zM1101 226h10v10h-10zM881 246h10v10h-10zM881 256h10v10h-10zM1111 266h10v10h-10zM1111 276h10v10h-10zM881 286h10v10h-10zM1111 286h10v10h-10zM881 296h10v10h-10zM1101 326h10v10h-10zM891 336h10v10h-10zM1091 356h10v10h-10zM911 366h10v10h-10zM1091 366h10v10h-10zM921 376h10v10h-10zM1081 376h10v10h-10zM931 386h10v10h-10zM1071 386h10v10h-10zM951 396h10v10h-10zM1051 396h10v10h-10zM981 406h60v10h-60z"/><path fill="#aeaeae" d="M981 176h50v10h-50zM951 186h10v10h-10zM931 196h10v10h-10zM1071 196h10v10h-10zM911 206h10v10h-10zM891 226h10v10h-10zM1101 236h10v10h-10zM881 266h10v10h-10zM881 276h10v10h-10zM1101 306h10v10h-10zM1101 316h10v10h-10zM891 326h10v10h-10zM901 346h10v10h-10zM1091 346h10v10h-10zM911 356h10v10h-10zM1061 386h10v10h-10zM961 396h10v10h-10zM1041 396h10v10h-10z"/><path fill="#b1b1b1" d="M961 186h10v10h-10zM1051 186h10v10h-10zM941 196h10v10h-10zM1081 206h10v10h-10zM901 216h10v10h-10zM1091 216h10v10h-10zM1101 246h10v10h-10zM1101 256h10v10h-10zM1101 266h10v10h-10zM1101 276h10v10h-10zM1101 286h10v10h-10zM1101 296h10v10h-10zM891 306h10v10h-10zM891 316h10v10h-10zM901 336h10v10h-10zM1091 336h10v10h-10zM921 366h10v10h-10zM1081 366h10v10h-10zM931 376h10v10h-10zM1071 376h10v10h-10zM941 386h10v10h-10zM1051 386h10v10h-10zM971 396h70v10h-70z"/><path fill="#b4b4b4" d="M971 186h20v10h-20zM1031 186h20v10h-20zM1061 196h10v10h-10zM921 206h10v10h-10zM1091 226h10v10h-10zM891 236h10v10h-10zM891 246h10v10h-10zM891 286h10v10h-10zM891 296h10v10h-10zM1091 316h10v10h-10zM901 326h10v10h-10zM1091 326h10v10h-10zM911 346h10v10h-10zM1081 346h10v10h-10zM921 356h10v10h-10zM1081 356h10v10h-10zM1071 366h10v10h-10zM1061 376h10v10h-10zM951 386h10v10h-10zM1041 386h10v10h-10z"/><path fill="#b7b7b7" d="M991 186h40v10h-40zM951 196h10v10h-10zM1051 196h10v10h-10zM931 206h10v10h-10zM1071 206h10v10h-10zM911 216h10v10h-10zM1081 216h10v10h-10zM901 226h10v10h-10zM1091 236h10v10h-10zM1091 246h10v10h-10zM891 256h10v10h-10zM1091 256h10v10h-10zM891 266h10v10h-10zM891 276h10v10h-10zM1091 296h10v10h-10zM1091 306h10v10h-10zM901 316h10v10h-10zM911 336h10v10h-10zM1081 336h10v10h-10zM921 346h10v10h-10zM1071 356h10v10h-10zM931 366h10v10h-10zM941 376h10v10h-10zM1051 376h10v10h-10zM961 386h20v10h-20zM1021 386h20v10h-20z"/><path fill="#bababa" d="M961 196h10v10h-10zM1041 196h10v10h-10zM941 206h10v10h-10zM1061 206h10v10h-10zM1081 226h10v10h-10zM1091 266h10v10h-10zM1091 276h10v10h-10zM1091 286h10v10h-10zM901 306h10v10h-10zM911 326h10v10h-10zM1081 326h10v10h-10zM1071 346h10v10h-10zM931 356h10v10h-10zM1061 366h10v10h-10zM951 376h10v10h-10zM1041 376h10v10h-10zM981 386h40v10h-40z"/><path fill="#bdbdbd" d="M971 196h70v10h-70zM921 216h10v10h-10zM1071 216h10v10h-10zM911 226h10v10h-10zM901 236h10v10h-10zM1081 236h10v10h-10zM901 246h10v10h-10zM1081 246h10v10h-10zM901 276h10v10h-10zM901 286h10v10h-10zM901 296h10v10h-10zM1081 306h10v10h-10zM911 316h10v10h-10zM1081 316h10v10h-10zM921 336h10v10h-10zM1071 336h10v10h-10zM931 346h10v10h-10zM1061 356h10v10h-10zM941 366h10v10h-10zM1051 366h10v10h-10zM961 376h10v10h-10zM1021 376h20v10h-20z"/><path fill="#c0c0c0" d="M951 206h20v10h-20zM1041 206h20v10h-20zM931 216h10v10h-10zM1061 216h10v10h-10zM1071 226h10v10h-10zM901 256h10v10h-10zM1081 256h10v10h-10zM901 266h10v10h-10zM1081 266h10v10h-10zM1081 276h10v10h-10zM1081 286h10v10h-10zM1081 296h10v10h-10zM911 306h10v10h-10zM921 326h10v10h-10zM1071 326h10v10h-10zM931 336h10v10h-10zM1061 346h10v10h-10zM941 356h10v10h-10zM951 366h10v10h-10zM1041 366h10v10h-10zM971 376h50v10h-50z"/><path fill="#c3c3c3" d="M971 206h20v10h-20zM1021 206h20v10h-20zM941 216h10v10h-10zM1051 216h10v10h-10zM921 226h10v10h-10zM911 236h10v10h-10zM1071 236h10v10h-10zM1071 246h10v10h-10zM911 286h10v10h-10zM911 296h10v10h-10zM1071 306h10v10h-10zM921 316h10v10h-10zM1071 316h10v10h-10zM1061 336h10v10h-10zM941 346h10v10h-10zM951 356h10v10h-10zM1051 356h10v10h-10zM961 366h20v10h-20zM1021 366h20v10h-20z"/><path fill="#c6c6c6" d="M991 206h30v10h-30zM951 216h10v10h-10zM1041 216h10v10h-10zM931 226h10v10h-10zM1061 226h10v10h-10zM921 236h10v10h-10zM1061 236h10v10h-10zM911 246h10v10h-10zM911 256h10v10h-10zM1071 256h10v10h-10zM911 266h10v10h-10zM1071 266h10v10h-10zM911 276h10v10h-10zM1071 276h10v10h-10zM1071 286h10v10h-10zM1071 296h10v10h-10zM921 306h10v10h-10zM931 326h10v10h-10zM1061 326h10v10h-10zM941 336h10v10h-10zM1051 346h10v10h-10zM961 356h10v10h-10zM1041 356h10v10h-10zM981 366h40v10h-40z"/><path fill="#c9c9c9" d="M961 216h80v10h-80zM941 226h10v10h-10zM1051 226h10v10h-10zM921 246h10v10h-10zM1061 246h10v10h-10zM1061 256h10v10h-10zM921 276h10v10h-10zM921 286h10v10h-10zM921 296h10v10h-10zM1061 296h10v10h-10zM1061 306h10v10h-10zM931 316h10v10h-10zM1061 316h10v10h-10zM1051 336h10v10h-10zM951 346h10v10h-10zM1041 346h10v10h-10zM971 356h70v10h-70z"/><path fill="#cccccc" d="M951 226h20v10h-20zM1031 226h20v10h-20zM931 236h20v10h-20zM1051 236h10v10h-10zM931 246h10v10h-10zM1051 246h10v10h-10zM921 256h10v10h-10zM921 266h10v10h-10zM1061 266h10v10h-10zM1061 276h10v10h-10zM1061 286h10v10h-10zM931 296h10v10h-10zM931 306h10v10h-10zM1051 316h10v10h-10zM941 326h10v10h-10zM1051 326h10v10h-10zM951 336h10v10h-10zM961 346h20v10h-20zM1031 346h10v10h-10z"/><path fill="#cfcfcf" d="M971 226h60v10h-60zM951 236h20v10h-20zM1031 236h20v10h-20zM941 246h10v10h-10zM1041 246h10v10h-10zM931 256h10v10h-10zM1051 256h10v10h-10zM931 266h10v10h-10zM1051 266h10v10h-10zM931 276h10v10h-10zM1051 276h10v10h-10zM931 286h10v10h-10zM1051 286h10v10h-10zM941 296h10v10h-10zM1051 296h10v10h-10zM941 306h10v10h-10zM1051 306h10v10h-10zM941 316h10v10h-10zM951 326h10v10h-10zM1041 326h10v10h-10zM961 336h10v10h-10zM1041 336h10v10h-10zM981 346h50v10h-50z"/><path fill="#d2d2d2" d="M971 236h60v10h-60zM951 246h90v10h-90zM941 256h110v10h-110zM941 266h110v10h-110zM941 276h110v10h-110zM941 286h110v10h-110zM951 296h100v10h-100zM951 306h100v10h-100zM951 316h100v10h-100zM961 326h80v10h-80zM971 336h70v10h-70z"/><!--/FIELD--></g>
<path d="M910.3 288.2 L910.0 264.5 L910.6 247.6 L913.7 234.1 L920.4 224.0 L932.3 214.7 L945.8 207.9 L961.0 202.8 L977.9 199.4 L991.5 197.8 L1005.0 196.6 L1010.0 197.8 L1015.1 201.1 L1030.3 205.0 L1047.2 212.1 L1060.8 219.7 L1069.2 225.7 L1074.3 234.1 L1077.4 242.6 L1076.0 254.4 L1076.8 267.9 L1081.1 278.1 L1081.5 286.5 L1080.2 291.8 L1076.0 300.3 L1075.2 308.7 L1071.8 315.5 L1076.8 324.8 L1077.4 332.4 L1073.5 340.9 L1068.4 347.6 L1069.6 354.4 L1064.2 362.9 L1055.7 367.9 L1042.2 372.2 L1025.3 375.5 L1011.7 377.7 L1005.0 376.7 L998.2 371.3 L999.9 367.9 L992.3 366.6 L981.3 367.9 L972.9 365.4 L968.6 357.8 L961.0 352.7 L945.8 347.6 L932.3 339.2 L925.5 332.4 L923.8 322.3 L918.7 313.8 L916.2 302.0 L911.1 293.5Z" fill="url(#g2)" stroke="#0c0c0c" stroke-width="0.8"/>
<path d="M811.0 136.0 L831.1 136.9 L826.2 140.8 L823.2 147.8 L825.2 151.2 L828.7 151.7 L829.7 155.6 L826.2 161.6 L819.8 167.5 L811.0 174.5Z" fill="#c9c9c9"/>
<path d="M1193.7 136.0 L1189.3 141.8 L1184.4 148.7 L1188.3 153.7 L1187.3 161.6 L1185.9 171.4 L1193.3 176.4 L1200.2 178.3 L1208.0 175.4 L1213.0 173.9 L1213.0 157.1 L1209.0 155.6 L1206.1 151.7 L1206.3 146.8 L1209.0 139.9 L1211.8 136.0Z" fill="#c2c2c2"/>
<path d="M811.0 404.5 L815.8 409.8 L818.8 418.7 L824.7 424.6 L828.7 429.5 L831.1 436.4 L834.1 444.3 L834.6 452.2 L833.1 459.0 L811.0 459.0Z" fill="#c8c8c8"/>
<path d="M811.5 459V136.5H1212.5" fill="none" stroke="#b4bac0" stroke-width="1"/>
<path d="M1212.5 136.5V458.5H811.5" fill="none" stroke="#9aa2aa" stroke-width="1"/>
</svg>
<div class="hl" style="left:811px;top:472px;width:433px"></div>
<div class="lbl" style="left:819px;top:485px">X shift</div>
<div class="a" style="left:823px;top:508px;width:132px;height:8px;background:#e6e8ea;border:1px solid #c0c2c4"></div>
<div class="a" style="left:823px;top:508px;width:62px;height:8px;background:#4a80b6"></div>
<svg class="a" style="left:883px;top:502px" width="13" height="19" viewBox="0 0 13 19"><path d="M1.5 1.5h9v12l-4.5 4.5l-4.5-4.5z" fill="#dcdee0" stroke="#a8a8a8" stroke-width="1"/></svg>
<svg class="a" style="left:820px;top:520px" width="140" height="8" viewBox="0 0 140 8" id="xt"><path d="M3.5 1V6M8.5 1V4M14.5 1V6M19.5 1V4M25.5 1V4M30.5 1V4M36.5 1V4M41.5 1V4M47.5 1V4M52.5 1V4M58.5 1V4M63.5 1V4M68.5 1V6M74.5 1V4M79.5 1V4M85.5 1V4M90.5 1V4M96.5 1V4M101.5 1V4M107.5 1V4M112.5 1V4M118.5 1V4M123.5 1V6M129.5 1V4M134.5 1V6" stroke="#222" stroke-width="1" fill="none"/></svg>
<div class="lbl" style="left:810px;top:526px">-600</div>
<div class="lbl" style="left:884px;top:526px">0</div>
<div class="lbl" style="left:942px;top:526px">600</div>
<div class="num" style="left:969px;top:508px;width:48px;height:24px;padding-top:3px">0</div>
<div class="sp u" style="left:1019px;top:508px"></div><div class="sp d" style="left:1019px;top:521px"></div>
<div class="btn" style="left:1063px;top:484px;width:84px;height:48px;line-height:40px;font-size:13.4px">Shift reset</div>
<div class="vl" style="left:1159px;top:484px;height:205px"></div>
<div class="lbl" style="left:822px;top:584px;font-size:12.8px">Flip CGH image</div>
<div class="a" style="left:823px;top:604px;width:120px;height:84px;background:#fff;border:1px solid #a2a2a2;overflow:hidden">
<div class="a" style="left:0;top:0;width:118px;height:19px;background:#4682b8;color:#e4edf6;padding:1px 0 0 5px">None</div>
<div class="a li" style="top:19px">Vertical</div>
<div class="a li" style="top:39px">Horizontal</div>
<div class="a li" style="top:59px">Vertical + Horizontal</div>
<div class="a li" style="top:79px"></div>
</div>
<div class="lbl" style="left:1000px;top:647px">Y shift</div>
<div class="num" style="left:999px;top:664px;width:48px;height:24px;padding-top:3px">0</div>
<div class="sp u" style="left:1049px;top:664px"></div><div class="sp d" style="left:1049px;top:677px"></div>
<div class="lbl r" style="left:1071px;top:549px;width:40px">500</div>
<div class="lbl r" style="left:1071px;top:588px;width:40px">200</div>
<div class="lbl r" style="left:1071px;top:615px;width:40px">0</div>
<div class="lbl r" style="left:1071px;top:641px;width:40px">-200</div>
<div class="lbl r" style="left:1071px;top:680px;width:40px">-500</div>
<svg class="a" style="left:1112px;top:552px" width="8" height="140" viewBox="0 0 8 140"><path d="M1 4.5H6.5M3 11.5H6.5M3 17.5H6.5M3 24.5H6.5M3 30.5H6.5M3 37.5H6.5M1 43.5H6.5M3 50.5H6.5M3 56.5H6.5M3 63.5H6.5M1 70.5H6.5M3 76.5H6.5M3 83.5H6.5M3 89.5H6.5M1 96.5H6.5M3 102.5H6.5M3 109.5H6.5M3 115.5H6.5M3 122.5H6.5M3 128.5H6.5M1 135.5H6.5" stroke="#222" stroke-width="1" fill="none"/></svg>
<div class="a" style="left:1123px;top:556px;width:8px;height:132px;background:#e6e8ea;border:1px solid #c0c2c4"></div>
<div class="a" style="left:1123px;top:626px;width:8px;height:62px;background:#4a80b6"></div>
<svg class="a" style="left:1118px;top:617px" width="20" height="12" viewBox="0 0 20 12"><path d="M6 1.5h12.5v9h-12.5l-4-4.5z" fill="#dcdee0" stroke="#a8a8a8" stroke-width="1"/></svg>
<div class="lbl" style="left:1172px;top:540px">Rotation</div>
<svg class="a" style="left:1168px;top:552px" width="80" height="80" viewBox="0 0 80 80"><circle cx="39.5" cy="39.5" r="35.3" fill="#fff" stroke="#bababa" stroke-width="0.9"/><circle cx="39.5" cy="39.5" r="28" fill="#fff" stroke="#bababa" stroke-width="0.9"/><circle cx="39.8" cy="12.6" r="3.2" fill="#9c9c9c"/></svg>
<div class="num" style="left:1171px;top:640px;width:60px;height:26px;padding-top:4px">0</div>
<div class="sp u" style="left:1233px;top:640px"></div><div class="sp d" style="left:1233px;top:655px"></div>

</div>
<div id="winb" class="a"></div>
</div>
</body>
</html>
